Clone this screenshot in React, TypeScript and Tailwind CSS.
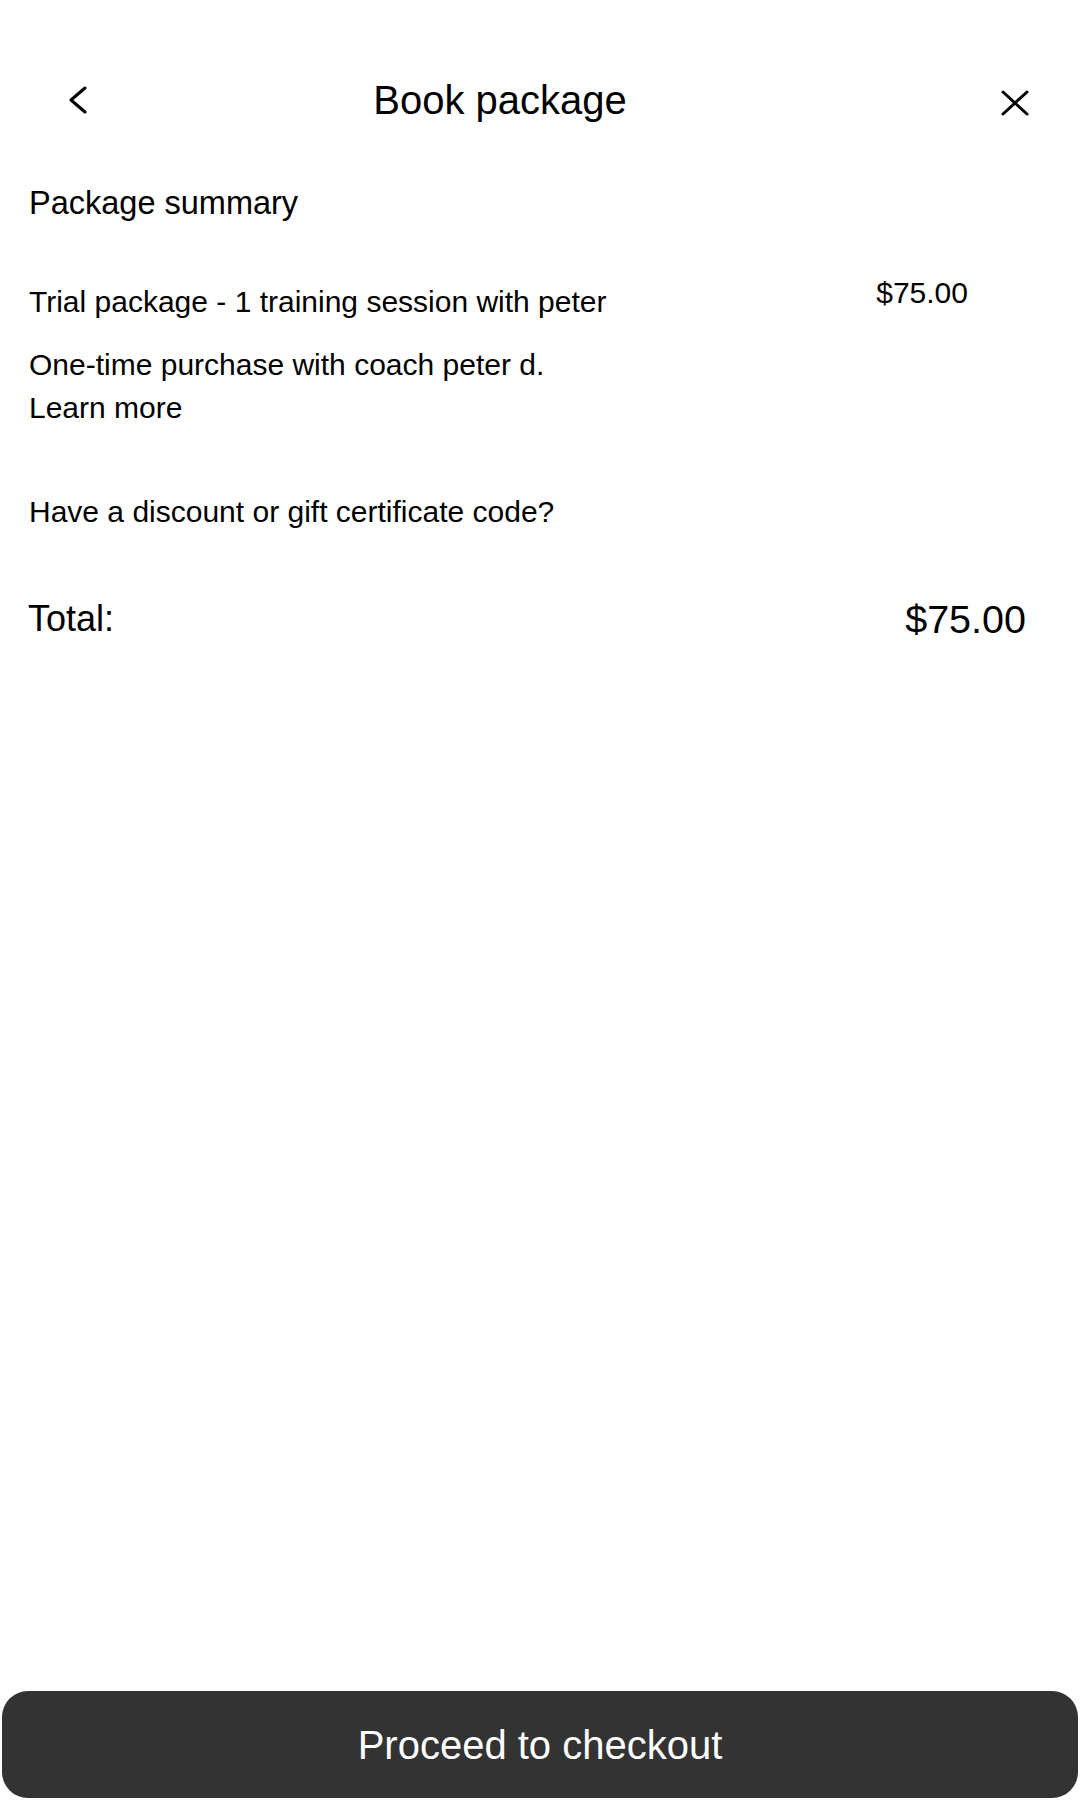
import React from "react";

export default function App() {
  return (
    <div
      className="min-h-screen w-[1080px] bg-white text-black flex flex-col"
      style={{ fontFamily: '"Liberation Sans", Arial, sans-serif' }}
    >
      {/* Header */}
      <div className="mt-[60px] h-[80px] flex items-center">
        <div className="w-[156px] h-full flex items-center justify-center">
          <svg width="20" height="28" viewBox="0 0 20 28" fill="none">
            <polyline
              points="17,2 3,14 17,26"
              stroke="#000"
              strokeWidth="3"
              strokeLinecap="round"
              strokeLinejoin="round"
            />
          </svg>
        </div>
        <div className="flex-1 text-center text-[40px] leading-[48px]">Book package</div>
        <div className="w-[236px] h-full flex items-center justify-end pr-[51px] pt-[6px]">
          <svg width="28" height="26" viewBox="0 0 28 26" fill="none">
            <line x1="2" y1="2" x2="26" y2="24" stroke="#000" strokeWidth="3" strokeLinecap="round" />
            <line x1="26" y1="2" x2="2" y2="24" stroke="#000" strokeWidth="3" strokeLinecap="round" />
          </svg>
        </div>
      </div>

      {/* Body */}
      <div className="pl-[29px]">
        <div className="mt-[43px] text-[32.5px] leading-[40px]">Package summary</div>

        <div className="mt-[50px] flex items-start justify-between pr-[112px]">
          <div className="mt-[9px] text-[30px] leading-[40px]">
            Trial package - 1 training session with peter
          </div>
          <div className="text-[30px] leading-[40px]">$75.00</div>
        </div>

        <div className="mt-[21px] text-[30px] leading-[43px]">
          <div>One-time purchase with coach peter d.</div>
          <div>Learn more</div>
        </div>

        <div className="mt-[61px] text-[30px] leading-[43px]">
          Have a discount or gift certificate code?
        </div>

        <div className="mt-[62px] flex items-center justify-between pr-[54px] -ml-[1px]">
          <div className="text-[36px] leading-[48px]">Total:</div>
          <div className="text-[39.5px] leading-[48px]">$75.00</div>
        </div>
      </div>

      {/* Bottom button */}
      <div className="mt-auto px-[2px] pb-[2px]">
        <button className="w-full h-[107px] rounded-[26px] bg-[#333333] text-white text-[40px] flex items-center justify-center">
          Proceed to checkout
        </button>
      </div>
    </div>
  );
}
